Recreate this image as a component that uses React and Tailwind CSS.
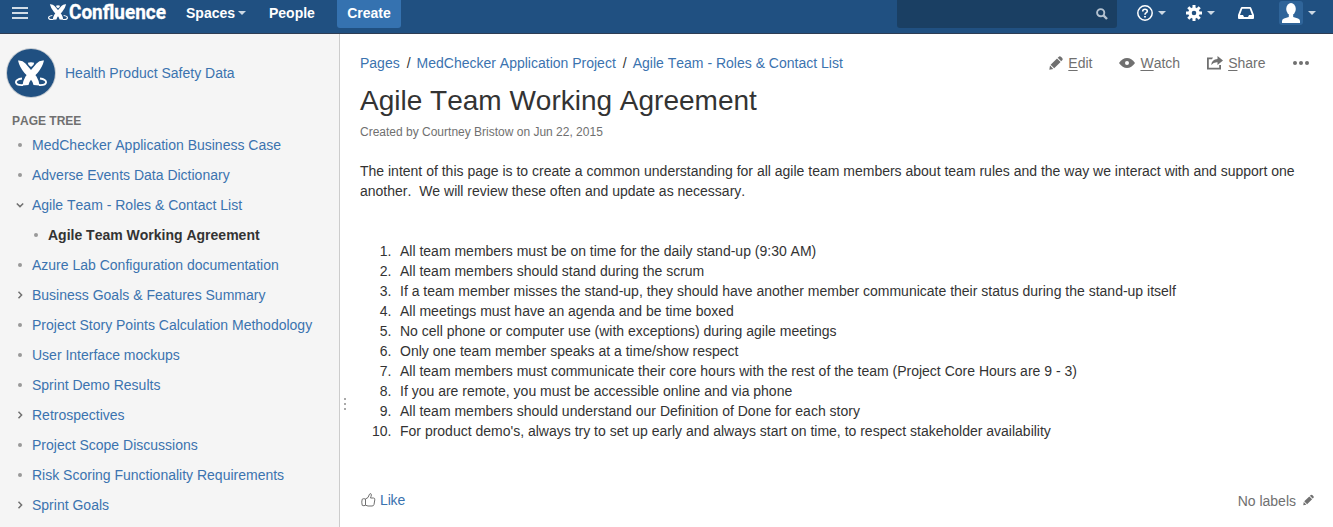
const tree = [
  { label: 'MedChecker Application Business Case', kind: 'leaf' },
  { label: 'Adverse Events Data Dictionary', kind: 'leaf' },
  { label: 'Agile Team - Roles & Contact List', kind: 'open' },
  { label: 'Agile Team Working Agreement', kind: 'current' },
  { label: 'Azure Lab Configuration documentation', kind: 'leaf' },
  { label: 'Business Goals & Features Summary', kind: 'closed' },
  { label: 'Project Story Points Calculation Methodology', kind: 'leaf' },
  { label: 'User Interface mockups', kind: 'leaf' },
  { label: 'Sprint Demo Results', kind: 'leaf' },
  { label: 'Retrospectives', kind: 'closed' },
  { label: 'Project Scope Discussions', kind: 'leaf' },
  { label: 'Risk Scoring Functionality Requirements', kind: 'leaf' },
  { label: 'Sprint Goals', kind: 'closed' },
];

const rules = [
  'All team members must be on time for the daily stand-up (9:30 AM)',
  'All team members should stand during the scrum',
  'If a team member misses the stand-up, they should have another member communicate their status during the stand-up itself',
  'All meetings must have an agenda and be time boxed',
  'No cell phone or computer use (with exceptions) during agile meetings',
  'Only one team member speaks at a time/show respect',
  'All team members must communicate their core hours with the rest of the team (Project Core Hours are 9 - 3)',
  'If you are remote, you must be accessible online and via phone',
  'All team members should understand our Definition of Done for each story',
  "For product demo's, always try to set up early and always start on time, to respect stakeholder availability",
];

function Mark({ className }) {
  return (
    <svg viewBox="0 0 32 26" className={className} fill="#fff">
      <path d="M3 .5Q7.500 0 10.500 3.500L21.500 16.500Q24 20.500 24.500 25.500L18.500 25Q18 22 15.500 19L9.500 13Q4.500 7 3 .5Z" />
      <path d="M29 .5Q24.500 0 21.500 3.500L10.500 16.500Q8 20.500 7.500 25.500L13.500 25Q14 22 16.500 19L22.500 13Q27.500 7 29 .5Z" />
      <path d="M12.800 2.800Q16 1.800 19.200 2.800Q19 5.500 16 7Q13 5.500 12.800 2.800Z" />
      <path d="M7 18.500C-1.500 19.500-1 25.500 8 25M25 18.500C33.500 19.500 33 25.500 24 25" fill="none" stroke="#fff" strokeWidth="1.800" />
    </svg>
  );
}

function Caret({ className }) {
  return (
    <svg viewBox="0 0 8 4" className={`h-1 w-2 shrink-0 ${className}`} fill="#ccd8e4">
      <path d="M0 0H8L4 4Z" />
    </svg>
  );
}

function Pencil({ className }) {
  return (
    <svg viewBox="0 0 14 14" className={className} fill="#707070">
      <path d="M9.600.9Q10.800-.3 12.200 1L13 1.800Q14.300 3.200 13.200 4.300L12.200 5.200L8.700 1.700ZM8 2.400L11.600 6L5.200 12.300L1.600 8.700ZM1 9.600L4.300 12.900L.3 13.700Z" />
    </svg>
  );
}

function Bullet({ kind }) {
  if (kind === 'open' || kind === 'closed') {
    return (
      <svg viewBox="0 0 8 8" className="h-2 w-2" fill="none" stroke="#707070" strokeWidth="1.500">
        <path d={kind === 'open' ? 'M.8 2.500L4 5.600L7.200 2.500' : 'M2.500.8L5.600 4L2.500 7.200'} />
      </svg>
    );
  }
  return <span className="mx-0.5 h-1 w-1 rounded-full bg-[#999]" />;
}

function Header() {
  return (
    <header className="flex h-[34px] shrink-0 items-start border-b border-[#2e3d54] bg-[#205081] text-sm font-bold leading-[26px] text-white">
      <svg viewBox="0 0 16 12" className="ml-3 mt-[7px] h-3 w-4" fill="#d2dce6">
        <path d="M0 0H16V2H0ZM0 5H16V7H0ZM0 10H16V12H0Z" />
      </svg>
      <div className="ml-5 flex w-[138px] shrink-0 items-start">
        <Mark className="mt-[3px] h-[18px] w-5 shrink-0" />
        <span className="ml-px origin-left scale-x-[0.925] font-[Roboto,sans-serif] text-[20.5px] leading-6 [-webkit-text-stroke:0.3px_#fff]">Confluence</span>
      </div>
      <span className="w-12">Spaces</span>
      <Caret className="ml-[4px] mt-[11px]" />
      <span className="ml-[23px] w-[45px]">People</span>
      <span className="ml-[23px] h-7 w-16 rounded-b-[3px] bg-[#3572b0] text-center">Create</span>
      <div className="ml-auto flex h-7 w-[220px] justify-end rounded-b-[3px] bg-[#1a3f63]">
        <svg viewBox="0 0 12 12" className="mr-[9px] mt-2 h-3 w-3" fill="none" stroke="#b4c2d0">
          <circle cx="4.700" cy="4.700" r="3.600" strokeWidth="1.900" />
          <path d="M7.400 7.400L11 11" strokeWidth="2.400" />
        </svg>
      </div>
      <svg viewBox="0 0 16 16" className="ml-5 mt-[5px] h-4 w-4" fill="none" stroke="#fff">
        <circle cx="8" cy="8" r="7.200" strokeWidth="1.500" />
        <path d="M5.700 6.500Q5.700 4.300 8 4.300Q10.300 4.300 10.300 6.200Q10.300 7.200 9 7.900Q8 8.500 8 9.700" strokeWidth="1.600" />
        <path d="M7.100 11H8.900V12.600H7.100Z" fill="#fff" stroke="none" />
      </svg>
      <Caret className="ml-[5px] mt-[11px]" />
      <svg viewBox="0 0 16 16" className="ml-5 mt-[5px] h-4 w-4">
        <circle cx="8" cy="8" r="4" fill="none" stroke="#fff" strokeWidth="3.400" />
        <path d="M8 0V3M8 13V16M0 8H3M13 8H16M2.300 2.300L4.500 4.500M11.500 11.500L13.700 13.700M2.300 13.700L4.500 11.500M11.500 4.500L13.700 2.300" stroke="#fff" strokeWidth="3" />
      </svg>
      <Caret className="ml-[5px] mt-[11px]" />
      <svg viewBox="0 0 16 12" className="ml-[23px] mt-[7px] h-3 w-4" fill="#fff" fillRule="evenodd">
        <path d="M4 0H12Q13 0 13.300 1L16 8V11Q16 12 15 12H1Q0 12 0 11V8L2.700 1Q3 0 4 0ZM4.300 1.700L2 8H5L6 10H10L11 8H14L11.700 1.700Z" />
      </svg>
      <div className="ml-[25px] mt-px flex h-6 w-6 justify-center rounded-[3px] bg-[#2f6499]">
        <svg viewBox="0 0 18 20" className="mt-0.5 h-5 w-[18px]" fill="#fff">
          <ellipse cx="9" cy="6" rx="4.800" ry="6" />
          <path d="M6.800 11H11.200V14L16 15.500Q18 16 18 18V20H0V18Q0 16 2 15.500L6.800 14Z" />
        </svg>
      </div>
      <Caret className="ml-[5px] mr-[17px] mt-[11px]" />
    </header>
  );
}

function Sidebar() {
  return (
    <aside className="flex w-[340px] shrink-0 flex-col border-r border-[#ccc] bg-[#f5f5f5] text-[#3b73af]">
      <div className="ml-[7px] mt-[15px] flex h-12 items-center">
        <div className="flex h-12 w-12 items-center justify-center rounded-full bg-[#205081] ring-1 ring-[#c5cbd1]">
          <Mark className="h-[26px] w-8" />
        </div>
        <span className="ml-2.5">Health Product Safety Data</span>
      </div>
      <h2 className="ml-3 mt-[14px] text-xs font-bold leading-5 text-[#707070]">PAGE TREE</h2>
      <ul className="-mt-px">
        {tree.map(({ label, kind }) => (
          <li key={label} className={`flex h-[30px] items-center gap-2 ${kind === 'current' ? 'pl-8 font-bold text-[#333]' : 'pl-4'}`}>
            <Bullet kind={kind} />
            <span className="whitespace-nowrap">{label}</span>
          </li>
        ))}
      </ul>
    </aside>
  );
}

function Action({ icon, label, className }) {
  return (
    <span className={`flex items-center text-[#707070] ${className}`}>
      {icon}
      <span className="underline decoration-1 underline-offset-2">{label[0]}</span>
      {label.slice(1)}
    </span>
  );
}

function Content() {
  return (
    <main className="flex min-w-0 grow">
      <div className="mt-[364px] flex w-5 shrink-0 flex-col gap-[3px] pl-1">
        <i className="h-0.5 w-0.5 bg-[#aaa]" />
        <i className="h-0.5 w-0.5 bg-[#aaa]" />
        <i className="h-0.5 w-0.5 bg-[#aaa]" />
      </div>
      <div className="flex min-w-0 grow flex-col">
        <div className="mt-[19px] flex h-5 items-center text-[#3b73af]">
          <span>Pages</span>
          <span className="ml-[7px] mr-[6px] text-[#333]">/</span>
          <span>MedChecker Application Project</span>
          <span className="ml-[7px] mr-[6px] text-[#333]">/</span>
          <span>Agile Team - Roles &amp; Contact List</span>
          <Action
            className="ml-auto"
            label="Edit"
            icon={<Pencil className="mr-[5px] h-[14px] w-[14px]" />}
          />
          <Action
            className="ml-[27px]"
            label="Watch"
            icon={
              <svg viewBox="0 0 16 12" className="mr-[5px] h-3 w-4" fill="#707070">
                <path d="M0 6Q3.500 1 8 1T16 6Q12.500 11 8 11T0 6Z" />
                <circle cx="8" cy="6" r="2" fill="#fff" />
              </svg>
            }
          />
          <Action
            className="ml-[27px]"
            label="Share"
            icon={
              <svg viewBox="0 0 16 14" className="mr-[5px] h-[14px] w-4" fill="#707070">
                <path d="M6 1.500H0V13.500H14V9H12.200V11.700H1.800V3.300H5Z" />
                <path d="M10.500 0L16 4.500L10.500 9V6.300Q6.500 6 4.200 9Q4.700 3.500 10.500 3Z" />
              </svg>
            }
          />
          <svg viewBox="0 0 16 4" className="ml-[27px] mr-[24.5px] h-1 w-4" fill="#707070">
            <circle cx="2" cy="2" r="2" />
            <circle cx="8" cy="2" r="2" />
            <circle cx="14" cy="2" r="2" />
          </svg>
        </div>
        <h1 className="mt-2.5 text-[28px] leading-9 text-[#333]">Agile Team Working Agreement</h1>
        <p className="mt-[3px] text-xs leading-5 text-[#707070]">Created by Courtney Bristow on Jun 22, 2015</p>
        <p className="mt-[19px] leading-5">
          The intent of this page is to create a common understanding for all agile team members about team rules and the way we interact with and support one
          <br />
          another.&nbsp; We will review these often and update as necessary.
        </p>
        <ol className="mt-10 leading-5">
          {rules.map((rule, i) => (
            <li key={rule} className="flex whitespace-nowrap">
              <span className="mr-[8.5px] w-[31.5px] text-right">{i + 1}.</span>
              <span>{rule}</span>
            </li>
          ))}
        </ol>
        <div className="mt-12 flex items-start leading-5">
          <svg viewBox="0 0 15 14" className="ml-px mt-[4px] h-[14px] w-[15px]" fill="none" stroke="#707070" strokeLinejoin="round">
            <path d="M4.500 6L7 4.500L8.500 1.200Q9 .2 10 .8Q10.800 1.500 10 3.500L9.500 5H12.500Q14 5 13.800 6.800L13 11.500Q12.700 13 11 13H7L4.500 12.200ZM4.500 6Q2.500 5.300 1.200 6.200Q.3 9 1.200 12.300Q3 13.300 4.500 12.200" />
          </svg>
          <span className="ml-1 mt-px text-[#3b73af] tracking-[-0.15px]">Like</span>
          <span className="ml-auto mt-0.5 text-[#707070]">No labels</span>
          <Pencil className="ml-[7px] mr-[19px] mt-[5px] h-3 w-[11px]" />
        </div>
      </div>
    </main>
  );
}

export default function App() {
  return (
    <div className="flex h-[527px] w-[1333px] flex-col overflow-hidden bg-white font-['Liberation_Sans',Arial,sans-serif] text-sm leading-5 text-[#333] [font-kerning:none]">
      <Header />
      <div className="flex min-h-0 grow">
        <Sidebar />
        <Content />
      </div>
    </div>
  );
}
